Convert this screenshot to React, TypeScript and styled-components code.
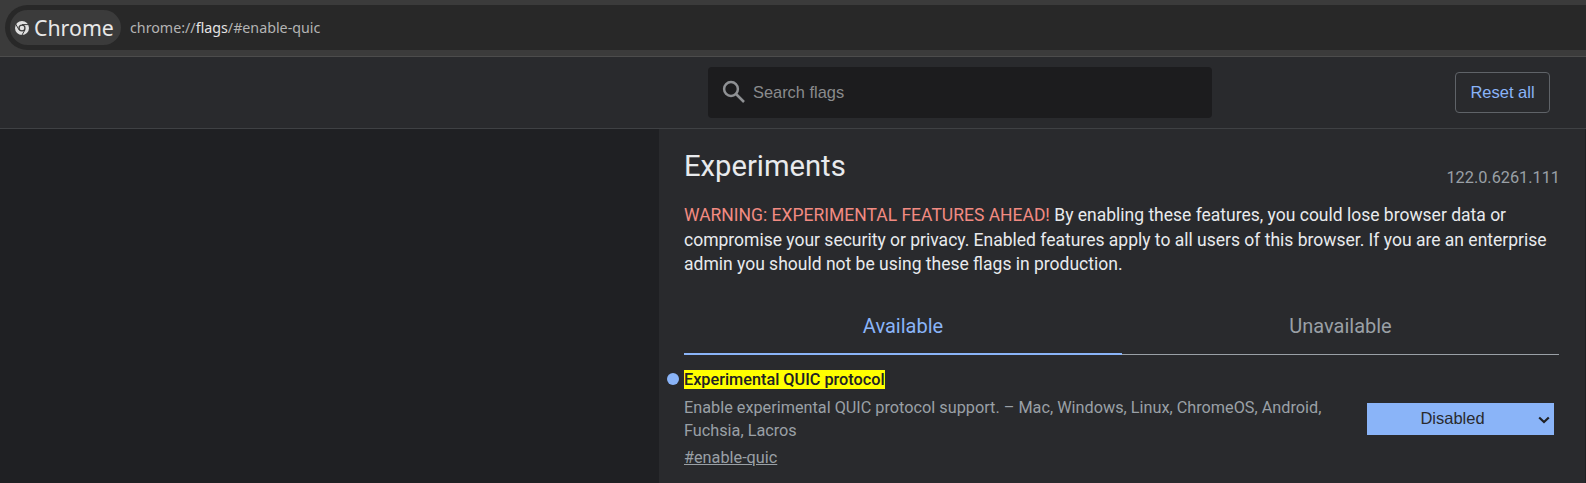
import { createGlobalStyle, styled } from 'styled-components'

const GlobalStyle = createGlobalStyle`
  html, body {
    margin: 0;
    padding: 0;
    height: 100%;
    overflow: hidden;
    background: #1f2023;
  }
  * {
    box-sizing: border-box;
  }
`;

const Page = styled.div`
  width: 1586px;
  height: 483px;
  display: flex;
  flex-direction: column;
  overflow: hidden;
  font-family: Roboto, sans-serif;
`;

const BrowserBar = styled.div`
  height: 57px;
  flex: none;
  background: #3b3b3b;
  border-bottom: 1px solid #4c4c4c;
  padding: 5px 0 6px 5px;
`;

const AddressBar = styled.div`
  height: 45px;
  background: #282828;
  border-radius: 23px 0 0 23px;
  display: flex;
  align-items: center;
  padding-left: 5px;
  gap: 9px;
`;

const SitePill = styled.div`
  width: 111px;
  height: 35px;
  background: #3b3b3b;
  border-radius: 18px;
  display: flex;
  align-items: center;
  padding-left: 5px;
  gap: 5px;
  color: #e8e8e8;
  font-family: "Noto Sans", sans-serif;
  font-size: 21.3px;
`;

const Url = styled.div`
  font-family: "Noto Sans", sans-serif;
  font-size: 14.25px;
  color: #b4b4b4;
  margin-top: -1px;

  b {
    font-weight: 400;
    color: #e4e4e4;
  }
`;

const Header = styled.header`
  height: 72px;
  flex: none;
  background: #292a2d;
  border-bottom: 1px solid #3f4144;
  display: grid;
  grid-template-columns: 708px 504px 1fr;
  align-items: center;
`;

const SearchBox = styled.div`
  grid-column: 2;
  height: 51px;
  margin-top: -1px;
  background: #1c1c1e;
  border-radius: 4px;
  display: flex;
  align-items: center;
  padding-left: 14px;
  gap: 7px;
  color: #8a8b8d;
  font-family: "Liberation Sans", sans-serif;
  font-size: 16.4px;
`;

const ResetButton = styled.button`
  justify-self: end;
  margin-right: 36px;
  margin-top: -1px;
  width: 95px;
  height: 41px;
  background: transparent;
  border: 1px solid #5f6368;
  border-radius: 4px;
  color: #8ab4f8;
  font-family: "Liberation Sans", sans-serif;
  font-size: 16.5px;
  padding: 0;
`;

const Body = styled.div`
  flex: 1;
  display: flex;
  padding-left: 659px;
  padding-right: 1px;
  min-height: 0;
`;

const Content = styled.main`
  flex: 1;
  background: #292a2d;
  padding: 21px 25px 0;
`;

const TitleRow = styled.div`
  display: flex;
  justify-content: space-between;
  align-items: flex-end;
`;

const Title = styled.h1`
  margin: 0;
  font-size: 29.2px;
  font-weight: 400;
  line-height: 32px;
  color: #e8eaed;
`;

const Version = styled.span`
  font-size: 16.3px;
  line-height: 18px;
  color: #9aa0a6;
  position: relative;
  top: 5px;
`;

const Warning = styled.p`
  margin: 21px 0 0;
  width: 875px;
  font-size: 17.5px;
  line-height: 24.5px;
  color: #e8eaed;
`;

const WarningLabel = styled.span`
  color: #f28b82;
`;

const Tabs = styled.div`
  display: flex;
  margin-top: 23px;
  width: 875px;
`;

const Tab = styled.div<{ $active?: boolean }>`
  height: 55px;
  display: flex;
  align-items: flex-start;
  justify-content: center;
  padding-top: 14px;
  font-size: 20px;
  line-height: 24px;
  flex: ${p => (p.$active ? '0 0 438px' : '1')};
  color: ${p => (p.$active ? '#8ab4f8' : '#9aa0a6')};
  border-bottom: ${p => (p.$active ? '2px solid #8ab4f8' : '1px solid #9aa0a6')};
`;

const Experiment = styled.section`
  position: relative;
  display: flex;
  justify-content: space-between;
  padding-top: 13px;
  width: 875px;
`;

const Dot = styled.span`
  position: absolute;
  left: -17px;
  top: 18px;
  width: 12px;
  height: 12px;
  border-radius: 50%;
  background: #8ab4f8;
`;

const ExperimentName = styled.h2`
  margin: 0;
  font-size: 16.25px;
  font-weight: 500;
  line-height: 24px;

  mark {
    background: #ffff00;
    color: #202124;
    padding: 0;
  }
`;

const Description = styled.p`
  margin: 4px 0 0;
  width: 660px;
  font-size: 16.25px;
  line-height: 23px;
  color: #9aa0a6;
`;

const Permalink = styled.a`
  display: inline-block;
  margin-top: 4px;
  font-size: 16.25px;
  line-height: 23px;
  color: #9aa0a6;
  text-decoration: underline;
`;

const SelectBox = styled.div`
  position: relative;
  width: 187px;
  height: 32px;
  margin-top: 35px;
  margin-right: 5px;
  background: #8ab4f8;
  color: #292a2d;
  font-family: "Liberation Sans", sans-serif;
  font-size: 16.5px;
  display: flex;
  align-items: center;
  justify-content: center;
  padding-right: 16px;
`;

const Chevron = styled.svg`
  position: absolute;
  right: 4px;
  top: 13px;
`;

function ChromeMark() {
  return (
    <svg width="14" height="14" viewBox="0 0 14 14" fill="none" style={{ flex: 'none' }}>
      <circle cx="7" cy="7" r="7" fill="#e0e0e0" />
      <path d="M7 3.6h7M4 8.8.6 2.9M10 8.8l-3.4 5.9" stroke="#3b3b3b" strokeWidth="1" />
      <circle cx="7" cy="7" r="3.6" fill="#3b3b3b" />
      <circle cx="7" cy="7" r="2.3" fill="#e0e0e0" />
    </svg>
  )
}

function SearchMark() {
  return (
    <svg width="24" height="24" viewBox="0 0 24 24" fill="none" style={{ flex: 'none' }}>
      <circle cx="9" cy="9" r="6.9" stroke="#8f9194" strokeWidth="2.5" />
      <path d="M14 14 22 22" stroke="#8f9194" strokeWidth="2.5" />
    </svg>
  )
}

export default function App() {
  return (
    <>
      <GlobalStyle />
      <Page>
        <BrowserBar>
          <AddressBar>
            <SitePill>
              <ChromeMark />
              Chrome
            </SitePill>
            <Url>chrome://<b>flags</b>/#enable-quic</Url>
          </AddressBar>
        </BrowserBar>
        <Header>
          <SearchBox>
            <SearchMark />
            Search flags
          </SearchBox>
          <ResetButton>Reset all</ResetButton>
        </Header>
        <Body>
          <Content>
            <TitleRow>
              <Title>Experiments</Title>
              <Version>122.0.6261.111</Version>
            </TitleRow>
            <Warning>
              <WarningLabel>WARNING: EXPERIMENTAL FEATURES AHEAD!</WarningLabel> By enabling these features, you could lose browser data or compromise your security or privacy. Enabled features apply to all users of this browser. If you are an enterprise admin you should not be using these flags in production.
            </Warning>
            <Tabs>
              <Tab $active>Available</Tab>
              <Tab>Unavailable</Tab>
            </Tabs>
            <Experiment>
              <Dot />
              <div>
                <ExperimentName><mark>Experimental QUIC protocol</mark></ExperimentName>
                <Description>Enable experimental QUIC protocol support. – Mac, Windows, Linux, ChromeOS, Android, Fuchsia, Lacros</Description>
                <Permalink>#enable-quic</Permalink>
              </div>
              <SelectBox>
                Disabled
                <Chevron width="12" height="8" viewBox="0 0 12 8" fill="none">
                  <path d="M1.2 1.5 6 6l4.8-4.5" stroke="#202124" strokeWidth="2.2" />
                </Chevron>
              </SelectBox>
            </Experiment>
          </Content>
        </Body>
      </Page>
    </>
  )
}
